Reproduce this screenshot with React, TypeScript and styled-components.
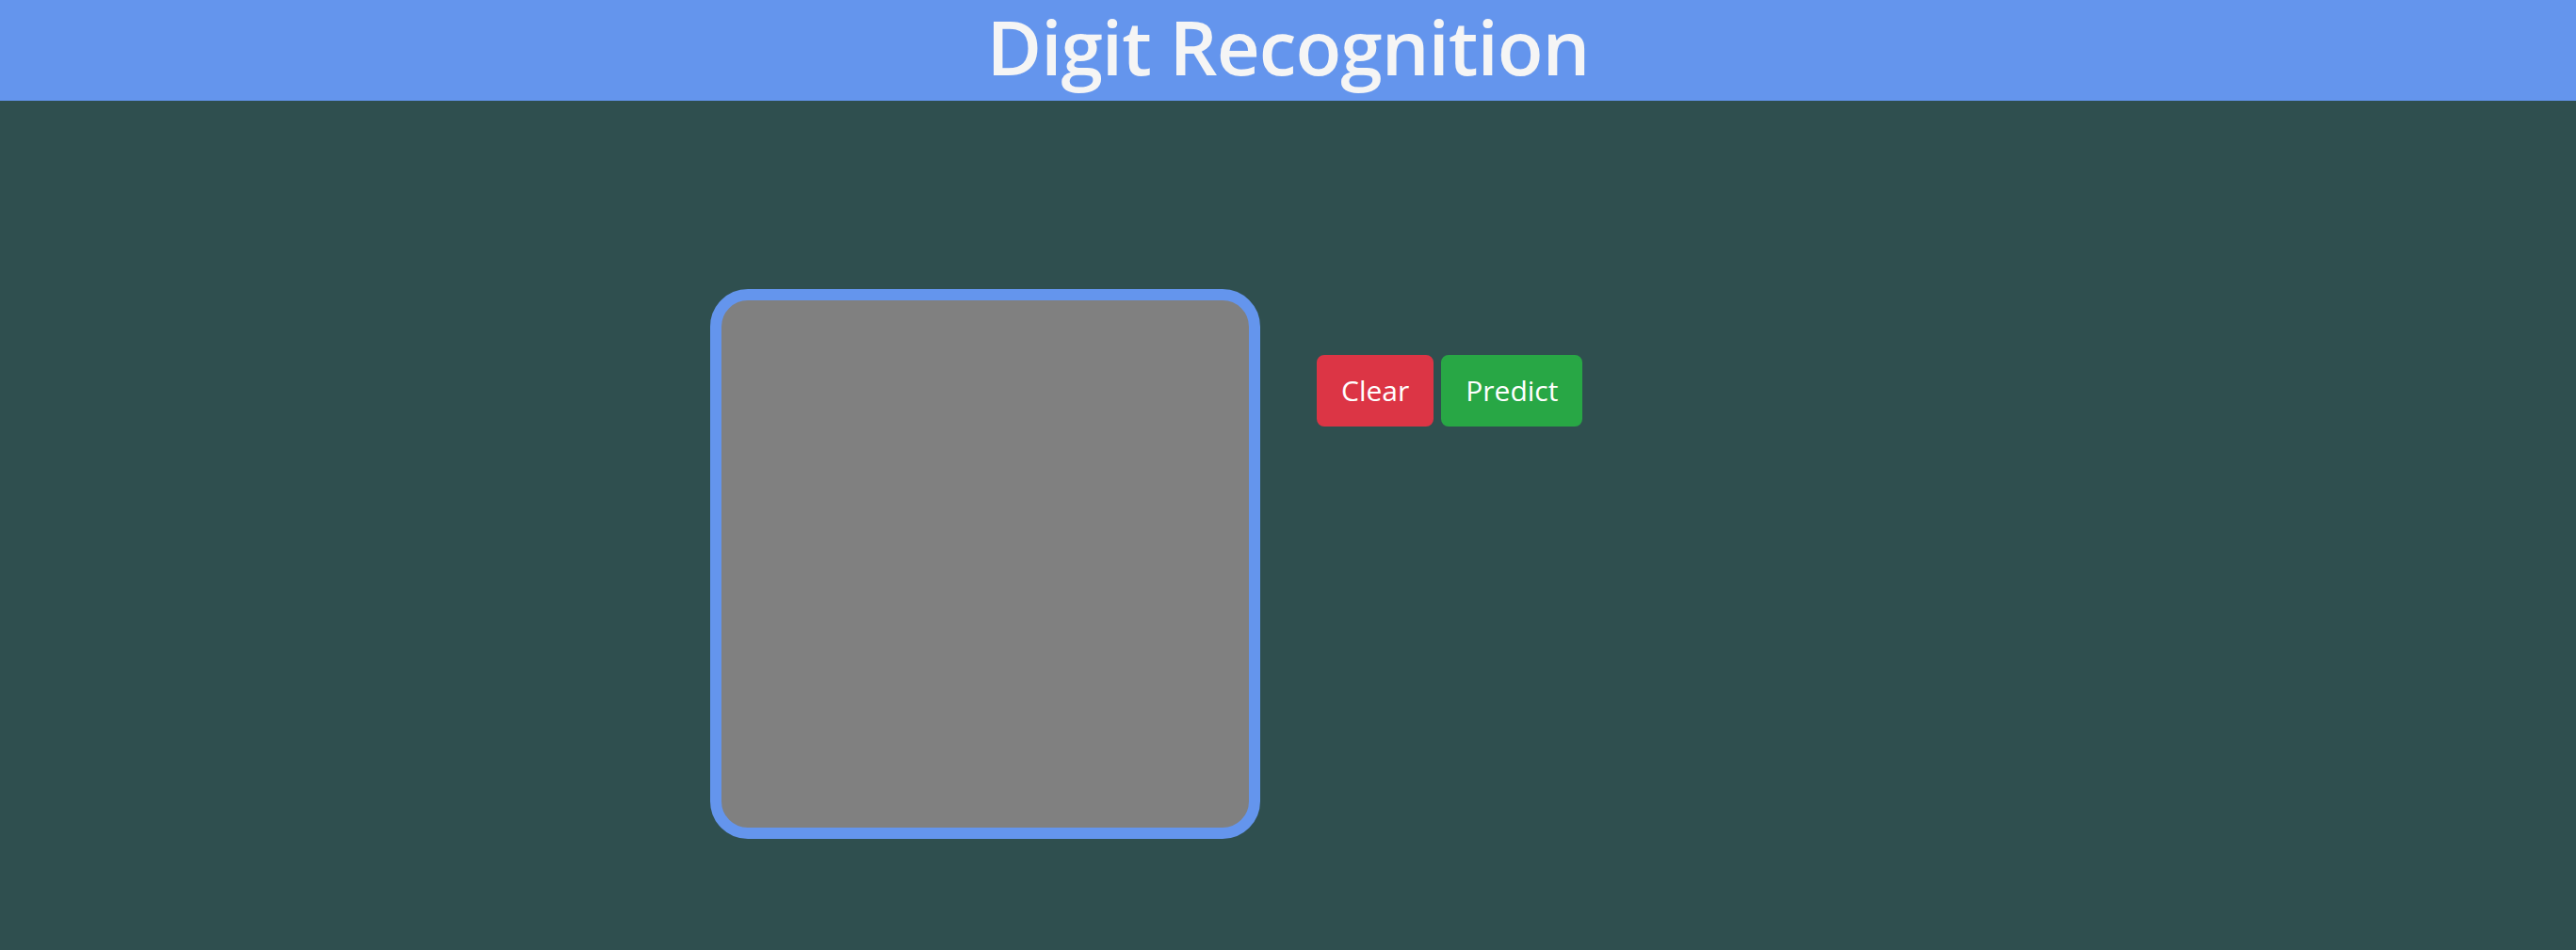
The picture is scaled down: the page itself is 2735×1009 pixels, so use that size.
import React from "react";
import styled, { createGlobalStyle } from "styled-components";

const Global = createGlobalStyle`
  html, body { margin: 0; padding: 0; }
  body {
    background: #2f4f4f;
    font-family: "Open Sans", "Noto Sans", sans-serif;
    min-height: 1009px;
  }
`;

const Header = styled.header`
  height: 107px;
  box-sizing: border-box;
  padding-bottom: 10px;
  background: #6495ed;
  display: flex;
  align-items: center;
  justify-content: center;
`;

const Title = styled.h1`
  margin: 0;
  color: #f5f5f5;
  font-size: 80px;
  font-weight: 600;
  line-height: 1.1;
  letter-spacing: -1px;
`;

const Main = styled.main`
  display: flex;
  align-items: flex-start;
  padding: 200px 0 0 754px;
  gap: 60px;
`;

const Board = styled.div`
  width: 560px;
  height: 560px;
  background: #808080;
  border: 12px solid #6495ed;
  border-radius: 40px;
`;

const Actions = styled.div`
  display: flex;
  gap: 8px;
  margin-top: 70px;
`;

const Button = styled.button<{ $tone: "danger" | "success" }>`
  font-family: "Open Sans", "Noto Sans", sans-serif;
  font-size: 30px;
  line-height: 48px;
  padding: 12px 24px;
  border: 2px solid transparent;
  border-radius: 8px;
  color: #fff;
  background: ${(p) => (p.$tone === "danger" ? "#dc3545" : "#28a745")};
  border-color: ${(p) => (p.$tone === "danger" ? "#dc3545" : "#28a745")};
  cursor: pointer;
`;

export default function App() {
  return (
    <>
      <Global />
      <Header>
        <Title>Digit Recognition</Title>
      </Header>
      <Main>
        <Board />
        <Actions>
          <Button $tone="danger">Clear</Button>
          <Button $tone="success">Predict</Button>
        </Actions>
      </Main>
    </>
  );
}
